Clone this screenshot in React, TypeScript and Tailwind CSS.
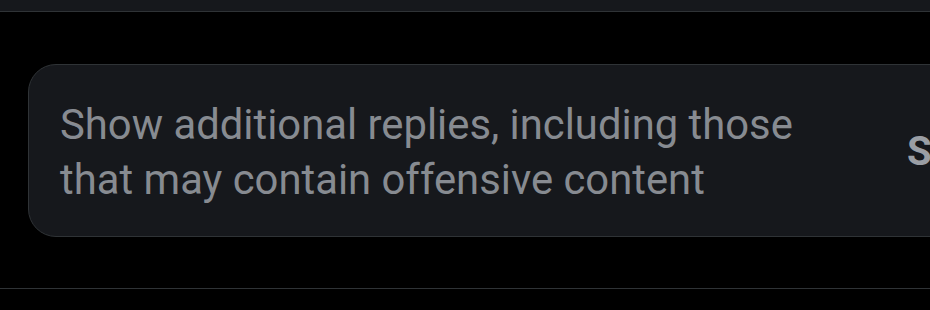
export default function App() {
  return (
    <div className="w-[930px] h-[310px] overflow-hidden bg-black font-['Roboto',sans-serif]">
      <div className="h-3 bg-[#16181c] border-b border-[#2f3336]" />
      <div className="pt-[52px] pl-7">
        <div className="w-[1060px] h-[173px] flex items-center rounded-[28px] bg-[#16181c] border border-[#2f3336] pl-[31px]">
          <p className="w-[790px] shrink-0 text-[41.8px] leading-[55px] text-[#878b91] pt-[3px]">
            Show additional replies, including those that may contain offensive content
          </p>
          <span className="ml-[57px] shrink-0 text-[40px] leading-none font-bold text-[#9a9ea4] pt-[2px]">Show</span>
        </div>
      </div>
      <div className="mt-[51px] h-px bg-[#2f3336]" />
    </div>
  );
}
